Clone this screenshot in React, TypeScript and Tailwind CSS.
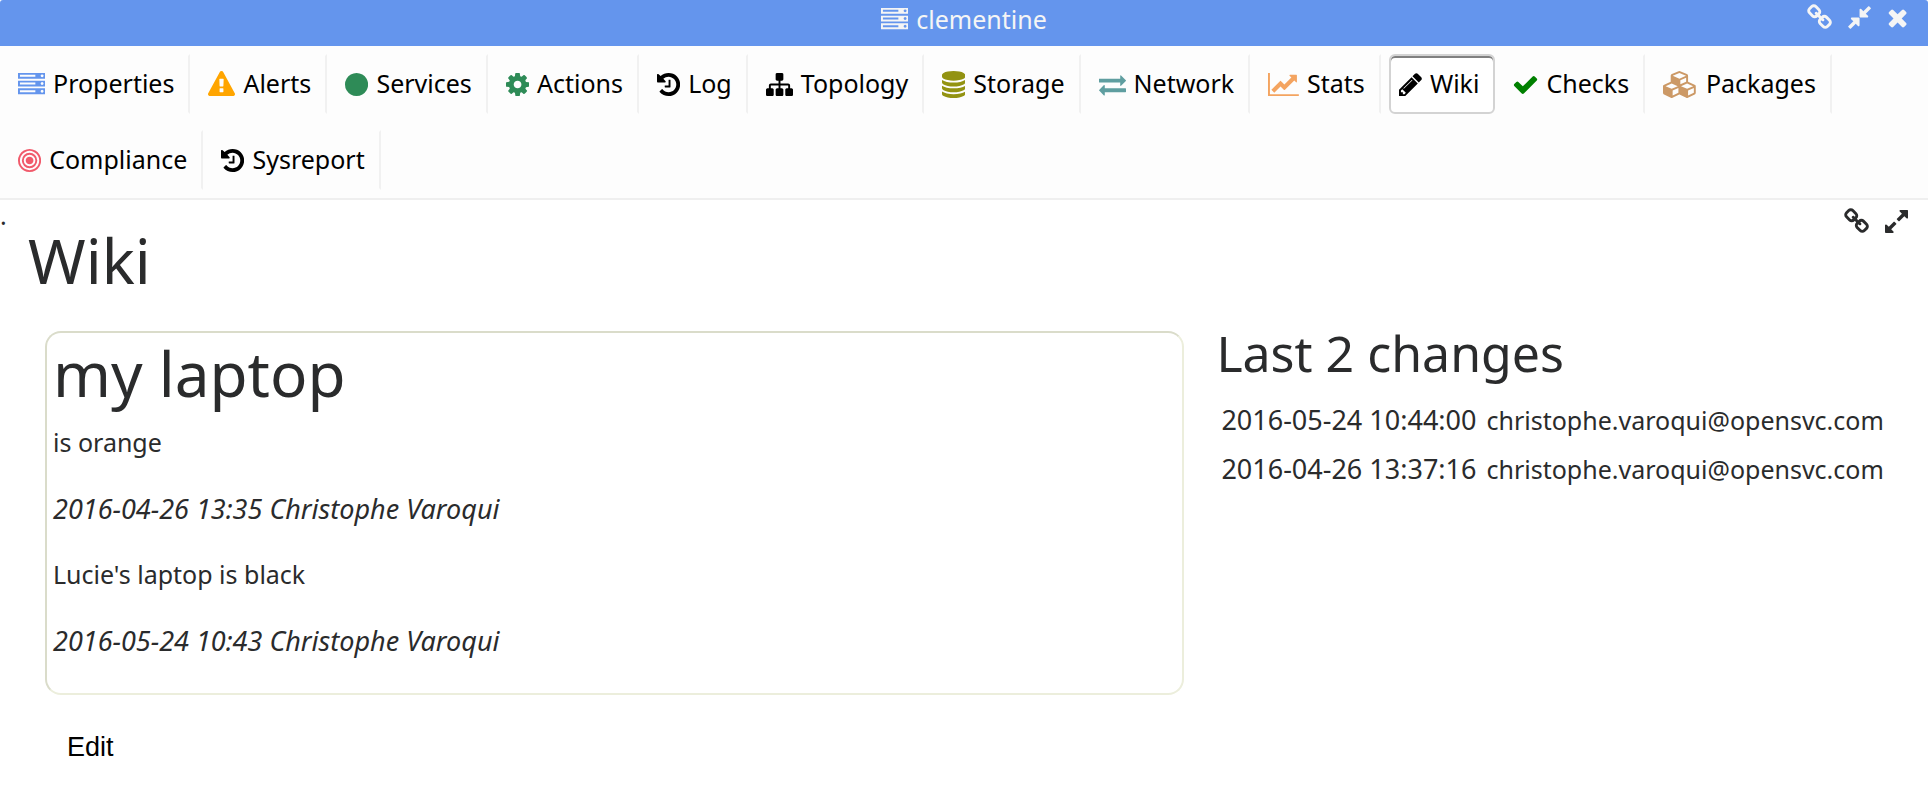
import { useState } from "react";

type Glyph = { box: string; d: string };

const glyphs: Record<string, Glyph> = {
  server: {
    box: "0 0 1792 1792",
    d: "M128 1408h1024v-128h-1024v128zm0-512h1024v-128h-1024v128zm1568 448q0-40-28-68t-68-28-68 28-28 68 28 68 68 28 68-28 28-68zm-1568-960h1024v-128h-1024v128zm1568 448q0-40-28-68t-68-28-68 28-28 68 28 68 68 28 68-28 28-68zm0-512q0-40-28-68t-68-28-68 28-28 68 28 68 68 28 68-28 28-68zm96 832v384h-1792v-384h1792zm0-512v384h-1792v-384h1792zm0-512v384h-1792v-384h1792z",
  },
  warning: {
    box: "0 0 1792 1792",
    d: "M1024 1375v-190q0-14-9.500-23.500t-22.500-9.500h-192q-13 0-22.500 9.500t-9.500 23.500v190q0 14 9.500 23.500t22.500 9.500h192q13 0 22.500-9.500t9.500-23.500zm-2-374l18-459q0-12-10-19-13-11-24-11h-220q-11 0-24 11-10 7-10 21l17 457q0 10 10 16.500t24 6.500h185q14 0 23.500-6.500t10.500-16.500zm-14-934l768 1408q35 63-2 126-17 29-46.500 46t-63.500 17h-1536q-34 0-63.500-17t-46.500-46q-37-63-2-126l768-1408q17-31 47-49t65-18 65 18 47 49z",
  },
  circle: {
    box: "128 0 1536 1792",
    d: "M1664 896q0 209-103 385.500t-279.500 279.500-385.500 103-385.500-103-279.500-279.500-103-385.500 103-385.500 279.500-279.500 385.500-103 385.500 103 279.500 279.500 103 385.500z",
  },
  cog: {
    box: "128 0 1536 1792",
    d: "M1152 896q0-106-75-181t-181-75-181 75-75 181 75 181 181 75 181-75 75-181zm512-109v222q0 12-8 23t-20 13l-185 28q-19 54-39 91 35 50 107 138 10 12 10 25t-9 23q-27 37-99 108t-94 71q-12 0-26-9l-138-108q-44 23-91 38-16 136-29 186-7 28-36 28h-222q-14 0-24.500-8.500t-11.500-21.500l-28-184q-49-16-90-37l-141 107q-10 9-25 9-14 0-25-11-126-114-165-168-7-10-7-23 0-12 8-23 15-21 51-66.500t54-70.500q-27-50-41-99l-183-27q-13-2-21-12.500t-8-23.500v-222q0-12 8-23t19-13l186-28q14-46 39-92-40-57-107-138-10-12-10-24 0-10 9-23 26-36 98.500-107.500t94.500-71.500q13 0 26 10l138 107q44-23 91-38 16-136 29-186 7-28 36-28h222q14 0 24.500 8.500t11.500 21.500l28 184q49 16 90 37l142-107q9-9 24-9 13 0 25 10 129 119 165 170 7 8 7 22 0 12-8 23-15 21-51 66.500t-54 70.500q26 50 41 98l183 28q13 2 21 12.500t8 23.500z",
  },
  history: {
    box: "128 0 1536 1792",
    d: "M1664 896q0 156-61 298t-164 245-245 164-298 61q-172 0-327-72.500t-264-204.500q-7-10-6.500-22.500t8.500-20.500l137-138q10-9 25-9 16 2 23 12 73 95 179 147t225 52q104 0 198.500-40.500t163.500-109.500 109.500-163.500 40.500-198.500-40.500-198.500-109.500-163.500-163.500-109.500-198.500-40.500q-98 0-188 35.500t-160 101.500l137 138q31 30 14 69-17 40-59 40h-448q-26 0-45-19t-19-45v-448q0-42 40-59 39-17 69 14l130 129q107-101 244.500-156.500t284.500-55.500q156 0 298 61t245 164 164 245 61 298zm-640-288v448q0 14-9 23t-23 9h-320q-14 0-23-9t-9-23v-64q0-14 9-23t23-9h224v-352q0-14 9-23t23-9h64q14 0 23 9t9 23z",
  },
  sitemap: {
    box: "0 0 1792 1792",
    d: "M1792 1248v320q0 40-28 68t-68 28h-320q-40 0-68-28t-28-68v-320q0-40 28-68t68-28h96v-192h-512v192h96q40 0 68 28t28 68v320q0 40-28 68t-68 28h-320q-40 0-68-28t-28-68v-320q0-40 28-68t68-28h96v-192h-512v192h96q40 0 68 28t28 68v320q0 40-28 68t-68 28h-320q-40 0-68-28t-28-68v-320q0-40 28-68t68-28h96v-192q0-52 38-90t90-38h512v-192h-96q-40 0-68-28t-28-68v-320q0-40 28-68t68-28h320q40 0 68 28t28 68v320q0 40-28 68t-68 28h-96v192h512q52 0 90 38t38 90v192h96q40 0 68 28t28 68z",
  },
  database: {
    box: "128 0 1536 1792",
    d: "M896 768q237 0 443-43t325-127v170q0 69-103 128t-280 93.500-385 34.500-385-34.500-280-93.500-103-128v-170q119 84 325 127t443 43zm0 768q237 0 443-43t325-127v170q0 69-103 128t-280 93.500-385 34.500-385-34.500-280-93.500-103-128v-170q119 84 325 127t443 43zm0-384q237 0 443-43t325-127v170q0 69-103 128t-280 93.500-385 34.500-385-34.500-280-93.500-103-128v-170q119 84 325 127t443 43zm0-1152q208 0 385 34.500t280 93.500 103 128v128q0 69-103 128t-280 93.500-385 34.500-385-34.500-280-93.500-103-128v-128q0-69 103-128t280-93.500 385-34.500z",
  },
  exchange: {
    box: "0 0 1792 1792",
    d: "M1792 1184v192q0 13-9.500 22.500t-22.500 9.500h-1376v192q0 13-9.500 22.500t-22.500 9.500q-12 0-24-10l-319-320q-9-9-9-22 0-14 9-23l320-320q9-9 23-9 13 0 22.500 9.500t9.500 22.500v192h1376q13 0 22.500 9.500t9.500 22.500zm0-544q0 14-9 23l-320 320q-9 9-23 9-13 0-22.500-9.500t-9.500-22.500v-192h-1376q-13 0-22.500-9.500t-9.500-22.500v-192q0-13 9.500-22.500t22.500-9.500h1376v-192q0-14 9-23t23-9q12 0 24 10l319 319q9 9 9 23z",
  },
  chart: {
    box: "0 0 2048 1792",
    d: "M2048 1536v128h-2048v-1536h128v1408h1920zm-128-1248v435q0 21-19.500 29.500t-35.500-7.500l-121-121-633 633q-10 10-23 10t-23-10l-233-233-416 416-192-192 585-585q10-10 23-10t23 10l233 233 464-464-121-121q-16-16-7.500-35.500t29.500-19.500h435q14 0 23 9t9 23z",
  },
  pencil: {
    box: "128 0 1536 1792",
    d: "M491 1536l91-91-235-235-91 91v107h128v128h107zm523-928q0-22-22-22-10 0-17 7l-542 542q-7 7-7 17 0 22 22 22 10 0 17-7l542-542q7-7 7-17zm-54-192l416 416-832 832h-416v-416zm683 96q0 53-37 90l-166 166-416-416 166-165q36-38 90-38 53 0 91 38l235 234q37 39 37 91z",
  },
  check: {
    box: "64 0 1664 1792",
    d: "M1671 566q0 40-28 68l-724 724-136 136q-28 28-68 28t-68-28l-136-136-362-362q-28-28-28-68t28-68l136-136q28-28 68-28t68 28l294 295 656-657q28-28 68-28t68 28l136 136q28 28 28 68z",
  },
  cubes: {
    box: "0 0 2304 1792",
    d: "M640 1632l384-192v-314l-384 164v342zm-64-454l404-173-404-173-404 173zm1088 454l384-192v-314l-384 164v342zm-64-454l404-173-404-173-404 173zm-448-293l384-165v-266l-384 164v267zm-64-379l441-189-441-189-441 189zm1088 518v416q0 36-19 67t-52 47l-448 224q-25 14-57 14t-57-14l-448-224q-4-2-7-4-2 2-7 4l-448 224q-25 14-57 14t-57-14l-448-224q-33-16-52-47t-19-67v-416q0-38 21.500-70t56.500-48l434-186v-400q0-38 21.500-70t56.500-48l448-192q23-10 50-10t50 10l448 192q35 16 56.500 48t21.500 70v400l434 186q36 16 57 48t21 70z",
  },
  bullseye: {
    box: "128 0 1536 1792",
    d: "M1152 896q0 106-75 181t-181 75-181-75-75-181 75-181 181-75 181 75 75 181zm128 0q0-159-112.500-271.500t-271.500-112.500-271.500 112.500-112.500 271.500 112.500 271.500 271.500 112.500 271.500-112.500 112.500-271.500zm128 0q0 212-150 362t-362 150-362-150-150-362 150-362 362-150 362 150 150 362zm128 0q0-130-51-248.500t-136.500-204-204-136.500-248.500-51-248.500 51-204 136.500-136.500 204-51 248.500 51 248.500 136.500 204 204 136.500 248.500 51 248.500-51 204-136.500 136.500-204 51-248.500zm128 0q0 209-103 385.500t-279.500 279.500-385.500 103-385.500-103-279.500-279.500-103-385.500 103-385.500 279.500-279.500 385.500-103 385.500 103 279.500 279.500 103 385.500z",
  },
  link: {
    box: "64 0 1664 1792",
    d: "M1520 1216q0-40-28-68l-208-208q-28-28-68-28-42 0-72 32 3 3 19 18.500t21.500 21.500 15 19 13 25.500 3.500 27.500q0 40-28 68t-68 28q-15 0-27.500-3.500t-25.500-13-19-15-21.500-21.500-18.500-19q-33 31-33 73 0 40 28 68l206 207q27 27 68 27 40 0 68-26l147-146q28-28 28-67zm-703-705q0-40-28-68l-206-207q-28-28-68-28-39 0-68 27l-147 146q-28 28-28 67 0 40 28 68l208 208q27 27 68 27 42 0 72-31-3-3-19-18.500t-21.500-21.500-15-19-13-25.500-3.500-27.500q0-40 28-68t68-28q15 0 27.500 3.500t25.500 13 19 15 21.500 21.500 18.500 19q33-31 33-73zm895 705q0 120-85 203l-147 146q-83 83-203 83-121 0-204-85l-206-207q-83-83-83-203 0-123 88-209l-88-88q-86 88-208 88-120 0-204-84l-208-208q-84-84-84-204t85-203l147-146q83-83 203-83 121 0 204 85l206 207q83 83 83 203 0 123-88 209l88 88q86-88 208-88 120 0 204 84l208 208q84 84 84 204z",
  },
  expand: {
    box: "128 0 1536 1792",
    d: "M883 1056q0 13-10 23l-332 332 144 144q19 19 19 45t-19 45-45 19h-448q-26 0-45-19t-19-45v-448q0-26 19-45t45-19 45 19l144 144 332-332q10-10 23-10t23 10l114 114q10 10 10 23zm781-864v448q0 26-19 45t-45 19-45-19l-144-144-332 332q-10 10-23 10t-23-10l-114-114q-10-10-10-23t10-23l332-332-144-144q-19-19-19-45t19-45 45-19h448q26 0 45 19t19 45z",
  },
  compress: {
    box: "128 0 1536 1792",
    d: "M896 960v448q0 26-19 45t-45 19-45-19l-144-144-332 332q-10 10-23 10t-23-10l-114-114q-10-10-10-23t10-23l332-332-144-144q-19-19-19-45t19-45 45-19h448q26 0 45 19t19 45zm755-672q0 13-10 23l-332 332 144 144q19 19 19 45t-19 45-45 19h-448q-26 0-45-19t-19-45v-448q0-26 19-45t45-19 45 19l144 144 332-332q10-10 23-10t23 10l114 114q10 10 10 23z",
  },
  close: {
    box: "192 0 1408 1792",
    d: "M1490 1322q0 40-28 68l-136 136q-28 28-68 28t-68-28l-294-294-294 294q-28 28-68 28t-68-28l-136-136q-28-28-28-68t28-68l294-294-294-294q-28-28-28-68t28-68l136-136q28-28 68-28t68 28l294 294 294-294q28-28 68-28t68 28l136 136q28 28 28 68t-28 68l-294 294 294 294q28 28 28 68z",
  },
};

function Icon({ name, className = "" }: { name: string; className?: string }) {
  const glyph = glyphs[name];
  return (
    <svg viewBox={glyph.box} aria-hidden="true" className={`h-[27px] w-auto shrink-0 fill-current ${className}`}>
      <path d={glyph.d} />
    </svg>
  );
}

const tabs = [
  { label: "Properties", icon: "server", color: "text-[#6495ed]" },
  { label: "Alerts", icon: "warning", color: "text-[#ffa500]" },
  { label: "Services", icon: "circle", color: "text-[#2e8b57]" },
  { label: "Actions", icon: "cog", color: "text-[#2e8b57]" },
  { label: "Log", icon: "history", color: "text-black" },
  { label: "Topology", icon: "sitemap", color: "text-black" },
  { label: "Storage", icon: "database", color: "text-[#939312]" },
  { label: "Network", icon: "exchange", color: "text-[#5f9ea0]" },
  { label: "Stats", icon: "chart", color: "text-[#f4a460]" },
  { label: "Wiki", icon: "pencil", color: "text-black" },
  { label: "Checks", icon: "check", color: "text-[#008000]" },
  { label: "Packages", icon: "cubes", color: "text-[#cc9966]" },
  { label: "Compliance", icon: "bullseye", color: "text-[#f15a6b]" },
  { label: "Sysreport", icon: "history", color: "text-black" },
];

const changes = [
  { date: "2016-05-24 10:44:00", author: "christophe.varoqui@opensvc.com" },
  { date: "2016-04-26 13:37:16", author: "christophe.varoqui@opensvc.com" },
];

export default function App() {
  const [active, setActive] = useState("Wiki");

  return (
    <div className="min-h-screen bg-white font-['Noto_Sans',sans-serif] text-[25px] text-[#2a2b2c]">
      <header className="flex items-start rounded-t-[3px] bg-[#6495ed] px-5 pt-1 pb-3 leading-[30px] text-[#f5f5f5]">
        <div className="flex-1" />
        <div className="flex items-center gap-2">
          <Icon name="server" />
          <span>clementine</span>
        </div>
        <div className="flex flex-1 justify-end gap-4">
          <button aria-label="Link"><Icon name="link" /></button>
          <button aria-label="Shrink"><Icon name="compress" /></button>
          <button aria-label="Close"><Icon name="close" /></button>
        </div>
      </header>

      <nav className="flex flex-wrap gap-x-2 gap-y-4 border-b-2 border-[#efefef] bg-[#fdfdfd] px-2 py-2 text-black">
        {tabs.map((tab) => (
          <button
            key={tab.label}
            onClick={() => setActive(tab.label)}
            className={`flex h-[60px] items-center gap-2 border-2 pr-[14px] pl-2 ${
              tab.label === active
                ? "rounded-[6px] border-[#d3d3d3] bg-white shadow-[inset_0_2px_0_#808080]"
                : "border-transparent border-r-[#f1f1f1]"
            }`}
          >
            <Icon name={tab.icon} className={tab.color} />
            <span>{tab.label}</span>
          </button>
        ))}
      </nav>

      <main>
        <div className="flex h-[30px] justify-between pr-5 leading-[30px]">
          <span>.</span>
          <div className="flex gap-4 pt-2">
            <button aria-label="Link to wiki"><Icon name="link" /></button>
            <button aria-label="Expand wiki"><Icon name="expand" /></button>
          </div>
        </div>
        <h1 className="pl-7 text-[62px] leading-[60px]">Wiki</h1>

        <div className="mt-[41px] grid grid-cols-[5fr_3fr] gap-x-8 pr-7 pl-[45px]">
          <section>
            <article className="rounded-[16px] border-2 border-t-[#dadcca] border-r-[#eceedc] border-b-[#eceedc] border-l-[#dadcca] px-[6px] pt-[10px] pb-9 leading-[33px]">
              <h1 className="mb-[23px] text-[62px] leading-[60px]">my laptop</h1>
              <div className="flex flex-col gap-[33px]">
                <p>is orange</p>
                <p className="text-[27px] italic">2016-04-26 13:35 Christophe Varoqui</p>
                <p>Lucie's laptop is black</p>
                <p className="text-[27px] italic">2016-05-24 10:43 Christophe Varoqui</p>
              </div>
            </article>
            <button className="mt-9 ml-[22px] font-['Liberation_Sans',sans-serif] text-[27px] leading-8 text-black">Edit</button>
          </section>
          <section>
            <h2 className="text-[50px] leading-[44px]">Last 2 changes</h2>
            <table className="mt-5">
              <tbody>
                {changes.map((change) => (
                  <tr key={change.date} className="h-[49px]">
                    <td className="px-[5px] text-[27px] leading-[38px] whitespace-nowrap">{change.date}</td>
                    <td className="px-[5px] leading-[38px]">{change.author}</td>
                  </tr>
                ))}
              </tbody>
            </table>
          </section>
        </div>
      </main>
    </div>
  );
}
